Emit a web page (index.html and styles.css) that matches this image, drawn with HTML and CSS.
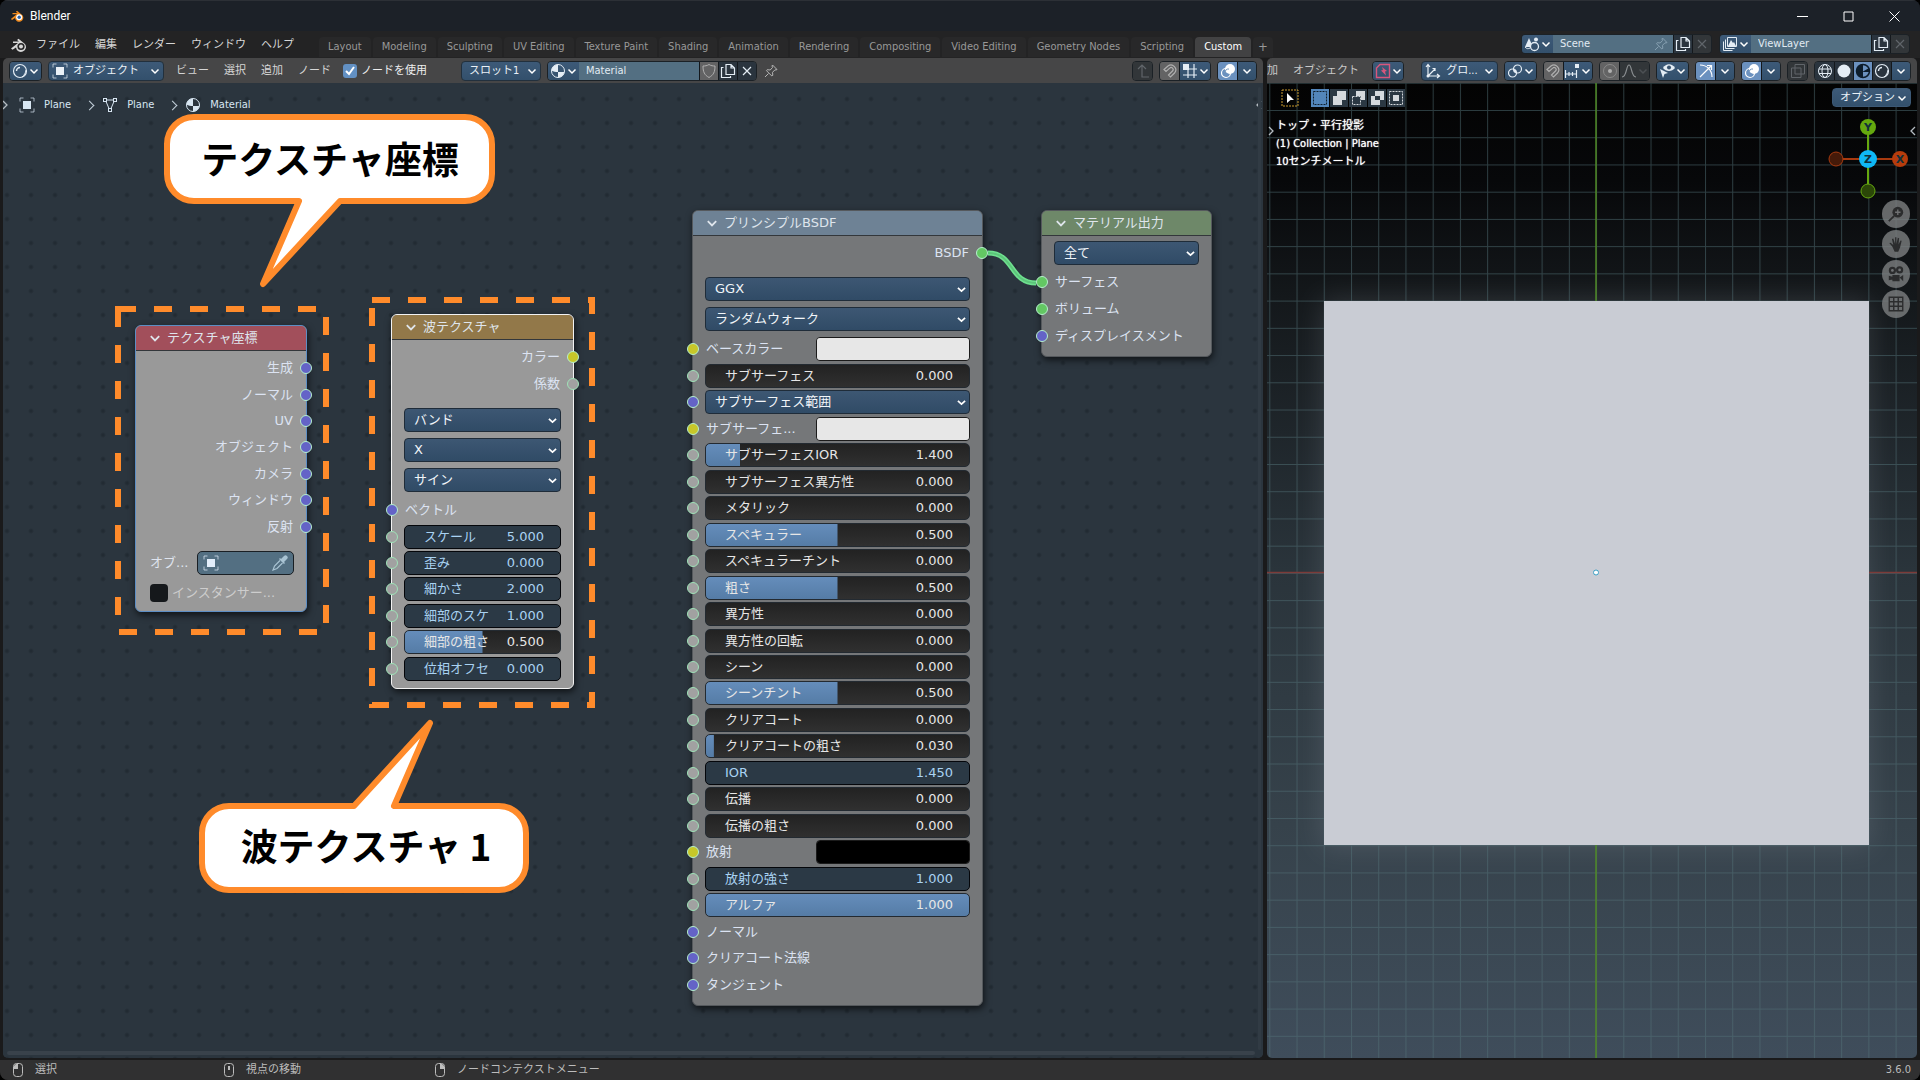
FILE: index.html
```html
<!DOCTYPE html>
<html lang="ja">
<head>
<meta charset="utf-8">
<title>Blender</title>
<link rel="stylesheet" href="styles.css">
</head>
<body>
<svg class="defs" aria-hidden="true">
  <defs>
    <symbol id="chev" viewBox="0 0 10 10"><path d="M1.500 3.500 5 7l3.500-3.500" fill="none" stroke="currentColor" stroke-width="1.500"/></symbol>
    <symbol id="obj" viewBox="0 0 16 16"><path d="M1 4.500V1h3.500M11.500 1H15v3.500M15 11.500V15h-3.500M4.500 15H1v-3.500" fill="none" stroke="currentColor" opacity=".7"/><path d="M4 4h8v8H4z" fill="currentColor"/></symbol>
    <symbol id="mat" viewBox="0 0 16 16"><circle cx="8" cy="8" r="6.500" fill="none" stroke="currentColor"/><path d="M8 1.500a6.500 6.500 0 0 0-6.500 6c2 1.300 4.200 1.500 6.500 1.500zM8 9h6.300A6.500 6.500 0 0 1 8 14.500z" fill="currentColor"/></symbol>
    <symbol id="matfill" viewBox="0 0 16 16"><circle cx="8" cy="8" r="6.500" fill="#6b91bf" stroke="#0d1d2c" stroke-width="1.500"/><path d="M8 1.500A6.500 6.500 0 0 0 4 13l4 1.500V9h6.300A6.500 6.500 0 0 0 14 5L8 8.500z" fill="#0d1d2c"/></symbol>
    <symbol id="mesh" viewBox="0 0 16 16"><path d="M4.500 3h7M4 4.500l3 7M12 4.500l-3 7" fill="none" stroke="currentColor"/><g fill="none" stroke="currentColor"><rect x="1.500" y="1.500" width="3" height="3"/><rect x="11.500" y="1.500" width="3" height="3"/><rect x="6.500" y="11.500" width="3" height="3"/></g></symbol>
    <symbol id="sphere" viewBox="0 0 16 16"><circle cx="8" cy="8" r="6.500" fill="none" stroke="currentColor" stroke-width="1.200"/><path d="M4.500 8A3.500 3.500 0 0 1 8 4.500" fill="none" stroke="currentColor" stroke-width="1.500"/><path d="M10 14c2.500-2 3.500-4 4-7" fill="none" stroke="currentColor"/></symbol>
    <symbol id="shield" viewBox="0 0 16 16"><path d="M8 1.500c2 1.300 4 1.500 6 1.500 0 6-1.500 9-6 11.500C3.500 12 2 9 2 3c2 0 4-.2 6-1.500z" fill="none" stroke="currentColor"/></symbol>
    <symbol id="copy" viewBox="0 0 16 16"><path d="M6 1.500h5l3.500 3.500v6.500H6zM11 1.500V5h3.500M3.500 4.500h-2v10h9v-1.500" fill="none" stroke="currentColor" stroke-width="1.200"/></symbol>
    <symbol id="cross" viewBox="0 0 16 16"><path d="m4 4 8 8M12 4l-8 8" stroke="currentColor" stroke-width="1.200"/></symbol>
    <symbol id="pin" viewBox="0 0 16 16"><path d="m9.500 2 4.500 4.500-1 .5-1-.2-2.500 2.500.3 3-1 .7-5.300-5.300.7-1 3 .3L9.500 4.500 9 3zM5.500 10.500 2 14" fill="none" stroke="currentColor" stroke-linejoin="round"/></symbol>
    <symbol id="magnet" viewBox="0 0 16 16"><path d="M2 6.500 6 3a4.800 4.800 0 0 1 6.500 7L8.500 14l-2-2 4-4a2 2 0 0 0-2.800-2.900L4 8.500z" fill="none" stroke="currentColor" stroke-width="1.200"/></symbol>
    <symbol id="grid" viewBox="0 0 16 16"><path d="M6 1v14M12 1v14M1 6h14M1 12h14" stroke="currentColor" stroke-width="1.200"/><path d="M1 1h6v6H1z" fill="currentColor"/></symbol>
    <symbol id="incr" viewBox="0 0 16 16"><path d="M1.500 7v8M1 11h12M5 9v4M8.500 9v4M12.500 7v8" stroke="currentColor" stroke-width="1.200"/><path d="M11 1h4v4h-4z" fill="currentColor"/></symbol>
    <symbol id="overlay" viewBox="0 0 16 16"><circle cx="10" cy="6" r="5" fill="currentColor"/><circle cx="6" cy="10" r="4.500" fill="none" stroke="currentColor" stroke-width="1.200"/><path d="M5 10a3.500 3.500 0 0 1 4-4" stroke="#7798bd" fill="none"/></symbol>
    <symbol id="parent" viewBox="0 0 16 16"><path d="M3 6l4-4 4 4M7 2v12h7" fill="none" stroke="currentColor" stroke-width="1.200"/></symbol>
    <symbol id="axes" viewBox="0 0 16 16"><path d="M3 2v11h11M3 13l7-7M1 4l2-2.500L5 4M12 11l2.500 2-2.500 2M7.500 5.500H10V8" fill="none" stroke="currentColor" stroke-width="1.200"/><circle cx="3" cy="13" r="1.500" fill="currentColor"/></symbol>
    <symbol id="pivot" viewBox="0 0 16 16"><circle cx="5.500" cy="10" r="4" fill="none" stroke="currentColor" stroke-width="1.200"/><circle cx="10.500" cy="6" r="4" fill="none" stroke="currentColor" stroke-width="1.200"/><circle cx="8" cy="8" r="1.500" fill="currentColor"/></symbol>
    <symbol id="dot" viewBox="0 0 16 16"><circle cx="8" cy="8" r="6.500" fill="none" stroke="currentColor" opacity=".5"/><circle cx="8" cy="8" r="2" fill="currentColor"/></symbol>
    <symbol id="curve" viewBox="0 0 16 16"><path d="M1 14c5 0 4-12 7-12s2 12 7 12" fill="none" stroke="currentColor" stroke-width="1.200"/></symbol>
    <symbol id="eye" viewBox="0 0 16 16"><path d="M4 5c3-5 9-5 12 0-3 4-9 4-12 0z" fill="currentColor"/><circle cx="10" cy="4.500" r="2" fill="#35506c"/><path d="m1 6 8 4-3.500 1L4 15z" fill="currentColor"/></symbol>
    <symbol id="gizmo" viewBox="0 0 16 16"><path d="M2 2c7 0 12 5 12 12M2 14 13 3M9 2.500h4.500V7" fill="none" stroke="currentColor" stroke-width="1.200"/></symbol>
    <symbol id="xray" viewBox="0 0 16 16"><path d="M5 1.500h9.500V11H5zM1.500 5H11v9.500H1.500z" fill="none" stroke="currentColor"/></symbol>
    <symbol id="wire" viewBox="0 0 16 16"><g fill="none" stroke="currentColor"><circle cx="8" cy="8" r="6.500"/><ellipse cx="8" cy="8" rx="3" ry="6.500"/><path d="M2 6h12M2 10.500h12"/></g></symbol>
    <symbol id="solid" viewBox="0 0 16 16"><circle cx="8" cy="8" r="6.500" fill="currentColor"/></symbol>
    <symbol id="scene" viewBox="0 0 16 16"><path d="M5 2 9 11H1z" fill="currentColor"/><circle cx="12" cy="3.500" r="2" fill="currentColor"/><circle cx="10.500" cy="10.500" r="4" fill="#35506c" stroke="currentColor" stroke-width="1.300"/><path d="M1 11c2 2 3 2 5 1" fill="none" stroke="currentColor"/></symbol>
    <symbol id="layers" viewBox="0 0 16 16"><path d="M5.500 1.500h9v9h-9zM3.500 3.500v9h9M1.500 5.500v9h9" fill="none" stroke="currentColor"/><path d="m6 10 3-6 2 3 1-1 2 4z" fill="currentColor"/></symbol>
    <symbol id="blender" viewBox="0 0 18 16"><path d="M1 11.500 8 6H3V4.500h6L7 3l1.500-1.200L15 7a5 5 0 1 1-9 3.500l-3.500 2.200z" fill="currentColor"/><circle cx="11" cy="9.500" r="3.600" fill="var(--hole)"/><circle cx="11" cy="9.500" r="2" fill="var(--eye)"/></symbol>
    <symbol id="dropper" viewBox="0 0 16 16"><path d="M8 5.500 2.500 11 1 15l4-1.500L10.500 8" fill="none" stroke="currentColor" stroke-width="1.200"/><path d="m7 4 5 5 1-1-1-1 3-3a2 2 0 0 0-3-3L9 4 8 3z" fill="currentColor"/></symbol>
    <symbol id="fake" viewBox="0 0 16 16"><path d="M5 1.500h9.500v13h-13V5z" fill="none" stroke="#d9567c" stroke-width="1.400"/><path d="M7 4l5 4-2 .5 1 4-5-5 2-.5z" fill="#d9567c"/></symbol>
    <symbol id="right" viewBox="0 0 8 12"><path d="m2 2 4 4-4 4" fill="none" stroke="currentColor" stroke-width="1.300"/></symbol>
    <symbol id="left" viewBox="0 0 8 12"><path d="M6 2 2 6l4 4" fill="none" stroke="currentColor" stroke-width="1.300"/></symbol>
  </defs>
</svg>

<header class="titlebar">
  <svg class="logo"><use href="#blender"/></svg>
  <h1>Blender</h1>
  <div class="winbtns">
    <button aria-label="最小化"><svg viewBox="0 0 11 11"><path d="M0 5.500h11"/></svg></button>
    <button aria-label="最大化"><svg viewBox="0 0 11 11"><path d="M1 1h9v9H1z"/></svg></button>
    <button aria-label="閉じる"><svg viewBox="0 0 11 11"><path d="m.5.500 10 10M10.500.500l-10 10"/></svg></button>
  </div>
</header>

<div class="topbar">
  <nav class="menus">
    <button class="app" aria-label="Blender"><svg><use href="#blender"/></svg></button>
    <button>ファイル</button><button>編集</button><button>レンダー</button><button>ウィンドウ</button><button>ヘルプ</button>
  </nav>
  <nav class="tabs">
    <button>Layout</button><button>Modeling</button><button>Sculpting</button><button>UV Editing</button><button>Texture Paint</button><button>Shading</button><button>Animation</button><button>Rendering</button><button>Compositing</button><button>Video Editing</button><button>Geometry Nodes</button><button>Scripting</button><button class="on">Custom</button><button class="add" aria-label="追加">+</button>
  </nav>
  <div class="scenes">
    <div class="group">
      <button class="b" aria-label="シーン"><svg class="i"><use href="#scene"/></svg><svg class="c"><use href="#chev"/></svg></button>
      <label class="field"><input value="Scene" aria-label="シーン名"><svg class="i dim"><use href="#pin"/></svg></label>
      <button class="b dark" aria-label="複製"><svg class="i"><use href="#copy"/></svg></button>
      <button class="b off" aria-label="削除"><svg class="i"><use href="#cross"/></svg></button>
    </div>
    <div class="group">
      <button class="b" aria-label="レイヤー"><svg class="i"><use href="#layers"/></svg><svg class="c"><use href="#chev"/></svg></button>
      <label class="field"><input value="ViewLayer" aria-label="レイヤー名"></label>
      <button class="b dark" aria-label="複製"><svg class="i"><use href="#copy"/></svg></button>
      <button class="b off" aria-label="削除"><svg class="i"><use href="#cross"/></svg></button>
    </div>
  </div>
</div>

<main class="workspace">
  <section class="editor nodes">
    <div class="bar">
      <div class="group"><button class="b" aria-label="エディター"><svg class="i"><use href="#sphere"/></svg><svg class="c"><use href="#chev"/></svg></button></div>
      <button class="pick pick-obj"><svg class="i"><use href="#obj"/></svg><span>オブジェクト</span><svg class="c"><use href="#chev"/></svg></button>
      <nav class="barmenu"><button>ビュー</button><button>選択</button><button>追加</button><button>ノード</button></nav>
      <label class="use"><input type="checkbox" checked>ノードを使用</label>
      <button class="pick pick-slot"><span>スロット1</span><svg class="c"><use href="#chev"/></svg></button>
      <div class="group">
        <button class="b" aria-label="マテリアル"><svg class="i"><use href="#mat"/></svg><svg class="c"><use href="#chev"/></svg></button>
        <label class="field"><input value="Material" aria-label="マテリアル名"></label>
        <button class="b gray" aria-label="フェイクユーザー"><svg class="i"><use href="#shield"/></svg></button>
        <button class="b dark" aria-label="複製"><svg class="i"><use href="#copy"/></svg></button>
        <button class="b dark" aria-label="解除"><svg class="i"><use href="#cross"/></svg></button>
      </div>
      <button class="bare" aria-label="ピン"><svg class="i"><use href="#pin"/></svg></button>
      <div class="tail">
        <div class="group"><button class="b off" aria-label="親ノードツリー"><svg class="i"><use href="#parent"/></svg></button></div>
        <div class="group"><button class="b gray" aria-label="スナップ"><svg class="i"><use href="#magnet"/></svg></button><button class="b" aria-label="スナップ先"><svg class="i"><use href="#grid"/></svg><svg class="c"><use href="#chev"/></svg></button></div>
        <div class="group"><button class="b lit" aria-label="オーバーレイ"><svg class="i"><use href="#overlay"/></svg></button><button class="b" aria-label="オーバーレイ設定"><svg class="c"><use href="#chev"/></svg></button></div>
      </div>
    </div>
    <div class="canvas">
      <ol class="crumbs">
        <li><svg class="i"><use href="#obj"/></svg>Plane</li>
        <li><svg class="i"><use href="#mesh"/></svg>Plane</li>
        <li><svg class="i"><use href="#mat"/></svg>Material</li>
      </ol>
      <svg class="flap flap-left"><use href="#right"/></svg><svg class="flap flap-right"><use href="#left"/></svg>
      <i class="scroll-x"></i><i class="scroll-y"></i>

      <article class="node tex">
        <h2><svg><use href="#chev"/></svg>テクスチャ座標</h2>
        <div class="body">
          <ul class="rows rows-7">
            <li class="out"><i class="s vec"></i>生成</li>
            <li class="out"><i class="s vec"></i>ノーマル</li>
            <li class="out"><i class="s vec"></i>UV</li>
            <li class="out"><i class="s vec"></i>オブジェクト</li>
            <li class="out"><i class="s vec"></i>カメラ</li>
            <li class="out"><i class="s vec"></i>ウィンドウ</li>
            <li class="out"><i class="s vec"></i>反射</li>
          </ul>
          <div class="stack">
            <div class="objrow"><span>オブ...</span><button class="objfield" aria-label="オブジェクト"><svg class="i"><use href="#obj"/></svg><svg class="i drop"><use href="#dropper"/></svg></button></div>
            <label class="inst"><input type="checkbox">インスタンサー...</label>
          </div>
        </div>
      </article>

      <article class="node wave">
        <h2><svg><use href="#chev"/></svg>波テクスチャ</h2>
        <div class="body">
          <ul class="rows rows-2">
            <li class="out"><i class="s col"></i>カラー</li>
            <li class="out"><i class="s val"></i>係数</li>
          </ul>
          <div class="stack">
            <select aria-label="タイプ"><option>バンド</option></select>
            <select aria-label="方向"><option>X</option></select>
            <select aria-label="形状"><option>サイン</option></select>
          </div>
          <ul class="rows rows-7 after">
            <li><i class="s vec"></i>ベクトル</li>
            <li><i class="s val"></i><label class="num key"><span>スケール</span><input value="5.000"></label></li>
            <li><i class="s val"></i><label class="num key"><span>歪み</span><input value="0.000"></label></li>
            <li><i class="s val"></i><label class="num key"><span>細かさ</span><input value="2.000"></label></li>
            <li><i class="s val"></i><label class="num key"><span>細部のスケ</span><input value="1.000"></label></li>
            <li><i class="s val"></i><label class="num" style="--v:50%"><span>細部の粗さ</span><input value="0.500"></label></li>
            <li><i class="s val"></i><label class="num key"><span>位相オフセ</span><input value="0.000"></label></li>
          </ul>
        </div>
      </article>

      <article class="node bsdf">
        <h2><svg><use href="#chev"/></svg>プリンシプルBSDF</h2>
        <div class="body">
          <ul class="rows rows-1"><li class="out"><i class="s shader"></i>BSDF</li></ul>
          <div class="stack">
            <select aria-label="分布"><option>GGX</option></select>
            <select aria-label="サブサーフェス方式"><option>ランダムウォーク</option></select>
          </div>
          <ul class="rows rows-25 after">
            <li><i class="s col"></i><label class="color"><span>ベースカラー</span><input type="color" value="#e7e7e7"></label></li>
            <li><i class="s val"></i><label class="num"><span>サブサーフェス</span><input value="0.000"></label></li>
            <li><i class="s vec"></i><select aria-label="サブサーフェス範囲"><option>サブサーフェス範囲</option></select></li>
            <li><i class="s col"></i><label class="color"><span>サブサーフェ...</span><input type="color" value="#e7e7e7"></label></li>
            <li><i class="s val"></i><label class="num" style="--v:13%"><span>サブサーフェスIOR</span><input value="1.400"></label></li>
            <li><i class="s val"></i><label class="num"><span>サブサーフェス異方性</span><input value="0.000"></label></li>
            <li><i class="s val"></i><label class="num"><span>メタリック</span><input value="0.000"></label></li>
            <li><i class="s val"></i><label class="num" style="--v:50%"><span>スペキュラー</span><input value="0.500"></label></li>
            <li><i class="s val"></i><label class="num"><span>スペキュラーチント</span><input value="0.000"></label></li>
            <li><i class="s val"></i><label class="num" style="--v:50%"><span>粗さ</span><input value="0.500"></label></li>
            <li><i class="s val"></i><label class="num"><span>異方性</span><input value="0.000"></label></li>
            <li><i class="s val"></i><label class="num"><span>異方性の回転</span><input value="0.000"></label></li>
            <li><i class="s val"></i><label class="num"><span>シーン</span><input value="0.000"></label></li>
            <li><i class="s val"></i><label class="num" style="--v:50%"><span>シーンチント</span><input value="0.500"></label></li>
            <li><i class="s val"></i><label class="num"><span>クリアコート</span><input value="0.000"></label></li>
            <li><i class="s val"></i><label class="num" style="--v:3%"><span>クリアコートの粗さ</span><input value="0.030"></label></li>
            <li><i class="s val"></i><label class="num key"><span>IOR</span><input value="1.450"></label></li>
            <li><i class="s val"></i><label class="num"><span>伝播</span><input value="0.000"></label></li>
            <li><i class="s val"></i><label class="num"><span>伝播の粗さ</span><input value="0.000"></label></li>
            <li><i class="s col"></i><label class="color"><span>放射</span><input type="color" value="#000000"></label></li>
            <li><i class="s val"></i><label class="num key"><span>放射の強さ</span><input value="1.000"></label></li>
            <li><i class="s val"></i><label class="num" style="--v:100%"><span>アルファ</span><input value="1.000"></label></li>
            <li><i class="s vec"></i>ノーマル</li>
            <li><i class="s vec"></i>クリアコート法線</li>
            <li><i class="s vec"></i>タンジェント</li>
          </ul>
        </div>
      </article>

      <article class="node output">
        <h2><svg><use href="#chev"/></svg>マテリアル出力</h2>
        <div class="body">
          <select aria-label="ターゲット"><option>全て</option></select>
          <ul class="rows rows-3">
            <li><i class="s shader"></i>サーフェス</li>
            <li><i class="s shader"></i>ボリューム</li>
            <li><i class="s vec"></i>ディスプレイスメント</li>
          </ul>
        </div>
      </article>

      <svg class="marks" aria-hidden="true">
        <g transform="translate(-3 -83)" fill="none">
          <path d="M988 253C1015 253 1009 283 1036 283" stroke="#6fe08f" stroke-width="5"/>
          <path d="M988 253C1015 253 1009 283 1036 283" stroke="#5cc47a" stroke-width="2"/>
          <g stroke="#ff8b2b" stroke-width="6">
            <rect x="118" y="309" width="208" height="323" stroke-dasharray="18 18"/>
            <rect x="372" y="300" width="220" height="405" stroke-dasharray="18 18"/>
            <path fill="#fff" stroke-linejoin="round" d="M194 117H465A27 27 0 0 1 492 144V174A27 27 0 0 1 465 201H340L263 284L299 201H194A27 27 0 0 1 167 174V144A27 27 0 0 1 194 117Z"/>
            <path fill="#fff" stroke-linejoin="round" d="M229 806H354L430 723L394 806H499A27 27 0 0 1 526 833V863A27 27 0 0 1 499 890H229A27 27 0 0 1 202 863V833A27 27 0 0 1 229 806Z"/>
          </g>
        </g>
      </svg>
      <p class="note note-a">テクスチャ座標</p>
      <p class="note note-b">波テクスチャ 1</p>
    </div>
  </section>

  <section class="editor view">
    <div class="bar">
      <nav class="barmenu"><button>加</button><button>オブジェクト</button></nav>
      <div class="group"><button class="b" aria-label="モード"><svg class="i"><use href="#fake"/></svg><svg class="c"><use href="#chev"/></svg></button></div>
      <button class="pick pick-axes"><svg class="i"><use href="#axes"/></svg><span>グロ...</span><svg class="c"><use href="#chev"/></svg></button>
      <div class="group"><button class="b" aria-label="ピボット"><svg class="i"><use href="#pivot"/></svg><svg class="c"><use href="#chev"/></svg></button></div>
      <div class="group"><button class="b gray" aria-label="スナップ"><svg class="i"><use href="#magnet"/></svg></button><button class="b" aria-label="スナップ先"><svg class="i"><use href="#incr"/></svg><svg class="c"><use href="#chev"/></svg></button></div>
      <div class="group"><button class="b gray" aria-label="プロポーショナル"><svg class="i"><use href="#dot"/></svg></button><button class="b off" aria-label="減衰"><svg class="i bright"><use href="#curve"/></svg><svg class="c"><use href="#chev"/></svg></button></div>
      <div class="tail">
        <div class="group"><button class="b" aria-label="可視性"><svg class="i"><use href="#eye"/></svg><svg class="c"><use href="#chev"/></svg></button></div>
        <div class="group"><button class="b lit" aria-label="ギズモ"><svg class="i"><use href="#gizmo"/></svg></button><button class="b" aria-label="ギズモ設定"><svg class="c"><use href="#chev"/></svg></button></div>
        <div class="group"><button class="b lit" aria-label="オーバーレイ"><svg class="i"><use href="#overlay"/></svg></button><button class="b" aria-label="オーバーレイ設定"><svg class="c"><use href="#chev"/></svg></button></div>
        <div class="group"><button class="b off" aria-label="透過"><svg class="i"><use href="#xray"/></svg></button></div>
        <div class="group"><button class="b dark" aria-label="ワイヤー"><svg class="i"><use href="#wire"/></svg></button><button class="b dark" aria-label="ソリッド"><svg class="i"><use href="#solid"/></svg></button><button class="b lit" aria-label="マテリアル"><svg class="i"><use href="#matfill"/></svg></button><button class="b dark" aria-label="レンダー"><svg class="i"><use href="#sphere"/></svg></button><button class="b" aria-label="シェーディング設定"><svg class="c"><use href="#chev"/></svg></button></div>
      </div>
    </div>
    <div class="stage">
      <svg class="world" viewBox="0 0 650 975" preserveAspectRatio="xMidYMid slice" aria-hidden="true">
        <defs>
          <pattern id="cells" width="27.230" height="27.230" patternUnits="userSpaceOnUse" x="2.300" y="27"><path d="M.5 0v27.230M0 .5h27.230" stroke="#54747a" stroke-opacity=".5" stroke-width="1"/></pattern>
          <linearGradient id="sky" x1="0" y1="0" x2="0" y2="1"><stop offset="0" stop-color="#030303"/><stop offset=".1" stop-color="#07080a"/><stop offset=".22" stop-color="#14181b"/><stop offset=".5" stop-color="#2a343b"/><stop offset=".76" stop-color="#36424b"/><stop offset="1" stop-color="#3f4d5b"/></linearGradient>
          <filter id="glow" x="-20%" y="-20%" width="140%" height="140%"><feGaussianBlur stdDeviation="14"/></filter>
        </defs>
        <path fill="url(#sky)" d="M0 0h650v975H0z"/>
        <path fill="#b9bfcc" opacity=".17" filter="url(#glow)" d="M55 216h548v548H55z"/>
        <path fill="url(#cells)" d="M0 0h650v975H0z"/>
        <path d="M0 489.500h650" stroke="#7c3b39" stroke-width="1.500"/>
        <path d="M329 0v975" stroke="#4f8a26" stroke-width="1.500"/>
        <path fill="#c9ccd4" d="M57 218h545v544H57z"/>
        <circle cx="329" cy="489.500" r="2.500" fill="#fff" stroke="#3c9fc4"/>
      </svg>
      <div class="tools">
        <button class="tool" aria-label="選択ツール"><svg viewBox="0 0 18 18"><path d="M1 1h16v16H1z" fill="none" stroke="#c99a2e" stroke-dasharray="2 1"/><path d="m6 4 7 7H9.500L6 14z" fill="#fff"/></svg></button>
        <div class="modes">
          <button class="on" aria-label="新規"><svg viewBox="0 0 18 18"><path d="M2.500 2.500h13v13h-13z" fill="none" stroke="#10202e" stroke-dasharray="2 1"/></svg></button>
          <button aria-label="追加"><svg viewBox="0 0 18 18"><path d="M7 2h9v9h-4v5H3V7h4z"/></svg></button>
          <button aria-label="減算"><svg viewBox="0 0 18 18"><path d="M7 2h9v9h-4V7H7z"/><path d="M3.500 7.500h8v8h-8z" fill="none" stroke="#d5d9dd" stroke-dasharray="2 1"/></svg></button>
          <button aria-label="反転"><svg viewBox="0 0 18 18"><path fill-rule="evenodd" d="M7 2h9v9h-4v5H3V7h4zm0 5v4h5V7z"/></svg></button>
          <button aria-label="交差"><svg viewBox="0 0 18 18"><path d="M6 6h6v6H6z"/><path d="M2.500 2.500h13v13h-13z" fill="none" stroke="#d5d9dd" stroke-dasharray="2 1"/></svg></button>
        </div>
        <button class="pick pick-opt"><span>オプション</span><svg class="c"><use href="#chev"/></svg></button>
      </div>
      <div class="info"><p>トップ・平行投影</p><p>(1) Collection | Plane</p><p>10センチメートル</p></div>
      <svg class="flap flap-left low"><use href="#right"/></svg><svg class="flap flap-right low"><use href="#left"/></svg>
      <div class="side">
        <svg class="orbit" viewBox="0 0 82 82">
          <path d="M41 9v64" stroke="#65a80f" stroke-width="2"/><path d="M9 41h64" stroke="#a83a0f" stroke-width="2"/>
          <circle cx="41" cy="9" r="8" fill="#65a80f"/><circle cx="73" cy="41" r="8" fill="#b63c0c"/><circle cx="41" cy="41" r="9" fill="#0fb8f5"/>
          <circle cx="9" cy="41" r="7" fill="#451a09" stroke="#a83a0f"/><circle cx="41" cy="73" r="7" fill="#2b4708" stroke="#65a80f"/>
          <text x="41" y="13">Y</text><text x="73" y="45">X</text><text x="41" y="45">Z</text>
        </svg>
        <div class="nav">
          <button aria-label="ズーム"><svg viewBox="0 0 20 20"><circle cx="12" cy="8" r="6"/><path d="m2 18 6-6" stroke="#2b2c2d" stroke-width="2"/><path d="M12 5v6M9 8h6" stroke="#707274" stroke-width="1.500"/></svg></button>
          <button aria-label="移動"><svg viewBox="0 0 20 20"><path d="M6 13 2.500 9 4 8.500 7 11 5.500 4.500 7 4l2 6V2.500h1.500V10l1.500-7 1.500.5-.7 7L15 6l1.300.5L14.500 14l-2 4.500h-4z"/></svg></button>
          <button aria-label="カメラ"><svg viewBox="0 0 20 20"><circle cx="6" cy="6" r="4"/><circle cx="14" cy="5.500" r="4"/><path d="M6 11h8v7H6zM14 14l4-3v7zM2 12l4 1v3l-4 1z"/><circle cx="6" cy="6" r="1.500" fill="#707274"/><circle cx="14" cy="5.500" r="1.500" fill="#707274"/></svg></button>
          <button aria-label="投影"><svg viewBox="0 0 20 20"><path d="M2.500 2.500h15v15h-15zM7.500 2.500v15M12.500 2.500v15M2.500 7.500h15M2.500 12.500h15" fill="none" stroke="#2b2c2d" stroke-width="1.500"/></svg></button>
        </div>
      </div>
    </div>
  </section>
</main>

<footer class="status">
  <span><svg viewBox="0 0 12 16"><rect x="1.500" y="1.500" width="9" height="13" rx="3"/><path class="f" d="M2 7V4l2-2h2v5z"/></svg>選択</span>
  <span><svg viewBox="0 0 12 16"><rect x="1.500" y="1.500" width="9" height="13" rx="3"/><path class="f" d="M5 4h2v4H5z"/></svg>視点の移動</span>
  <span><svg viewBox="0 0 12 16"><rect x="1.500" y="1.500" width="9" height="13" rx="3"/><path class="f" d="M10 7V4L8 2H6v5z"/></svg>ノードコンテクストメニュー</span>
  <span class="ver">3.6.0</span>
</footer>
</body>
</html>
```
FILE: styles.css
```css
* { box-sizing: border-box; }
html { background: #000; }
body {
  margin: 0;
  min-height: 100vh;
  display: flex;
  flex-direction: column;
  overflow: hidden;
  border-radius: 8px;
  background: #1a1a1b;
  color: #d6d6d6;
  font: 11px/16px "DejaVu Sans Condensed", "DejaVu Sans", "Noto Sans CJK JP", sans-serif;
}
button, input, select { font: inherit; color: inherit; margin: 0; padding: 0; border: 0; background: none; }
h1, h2, p, ul, ol { margin: 0; padding: 0; font: inherit; list-style: none; }
svg { display: block; flex: none; }
.defs { position: absolute; width: 0; height: 0; }

/* window title */
.titlebar { height: 31px; display: flex; align-items: center; padding: 0 3px 0 10px; background: #1c2128; border-top: 1px solid #2c3036; }
.logo { width: 15px; height: 14px; color: #ef8a1e; --hole: #fff; --eye: #2c64a8; }
.titlebar h1 { margin-left: 5px; color: #fff; font: 12px/16px Roboto, "Open Sans", sans-serif; }
.winbtns { margin-left: auto; display: flex; }
.winbtns button { width: 46px; height: 28px; display: grid; place-items: center; }
.winbtns svg { width: 11px; height: 11px; fill: none; stroke: #fff; }

/* top bar */
.topbar { height: 27px; display: flex; align-items: stretch; background: #232324; padding: 0 10px; }
.menus { display: flex; align-items: center; width: 309px; gap: 15px; white-space: nowrap; }
.app svg { width: 18px; height: 16px; color: #d6d6d6; --hole: #232324; --eye: #d6d6d6; }
.app { margin-right: -7px; }
.tabs { display: flex; gap: 2px; padding: 6px 0 1px; white-space: nowrap; }
.tabs button { padding: 0 9px; background: #282829; color: #989898; border-radius: 4px 4px 0 0; }
.tabs .on { background: #424243; color: #fff; }
.tabs .add { padding: 0 5px; font-size: 13px; }
.scenes { margin-left: auto; display: flex; gap: 7px; align-items: center; padding-bottom: 1px; }

/* shared header widgets */
.group { display: flex; height: 20px; border: 1px solid #1b2126; border-radius: 4px; overflow: hidden; }
.b { display: flex; align-items: center; justify-content: center; gap: 1px; min-width: 19px; padding: 0 1px; background: linear-gradient(#3d5a78, #33506c); color: #e4edf5; }
.b + .b, .field + .b { border-left: 1px solid #14181c; }
.i { width: 16px; height: 16px; }
.c { width: 10px; height: 10px; color: #fff; }
.group .b:has(.i):has(.c) { width: 31px; }
.b.dark { background: #2a343e; }
.b.gray { background: #636364; color: #b0b0b0; }
.b.off { background: #323639; color: #60656a; }
.b.off .c { color: #4c5054; }
.b.off .bright { color: #8b8f92; }
.b.lit { background: #6b91bf; color: #fff; }
.field { display: flex; align-items: center; width: 120px; padding: 0 4px 0 7px; background: #536f82; color: #e2ebf2; }
.field input { flex: 1; min-width: 0; outline: 0; }
.dim { color: #86a0b1; }
.pick { display: flex; align-items: center; height: 20px; padding: 0 3px; border: 1px solid #22303d; border-radius: 4px; background: linear-gradient(#3d5a78, #33506c); color: #eaf1f7; white-space: nowrap; }
.pick .c { margin-left: auto; }
.pick .i + span { margin-left: 5px; }
.pick-obj { width: 116px; }
.pick-slot { width: 80px; padding-left: 7px; }
.pick-axes { width: 79px; }
.bare { color: #b5b5b5; }

/* editors */
.workspace { flex: 1; display: flex; gap: 4px; padding: 0 3px 2px; min-height: 0; }
.editor { display: flex; flex-direction: column; min-width: 0; border-radius: 5px; overflow: hidden; }
.nodes { flex: 1260 1 0; }
.view { flex: 650 1 0; }
.bar { height: 25px; flex: none; display: flex; align-items: center; gap: 6px; padding: 0 6px; background: #464647; white-space: nowrap; }
.barmenu { display: flex; gap: 15px; padding: 0 7px 0 6px; }
.nodes .barmenu { padding-right: 6px; }
.tail { margin-left: auto; display: flex; gap: 6px; }
.use { display: flex; align-items: center; gap: 4px; margin-right: 28px; color: #eee; }
.use input { appearance: none; width: 14px; height: 14px; border-radius: 3px; background: #6290c3 url("data:image/svg+xml,%3Csvg xmlns='http://www.w3.org/2000/svg' viewBox='0 0 14 14'%3E%3Cpath d='m3 7 3 3 5-7' fill='none' stroke='%23fff' stroke-width='2'/%3E%3C/svg%3E"); }
.view .bar { padding-left: 0; padding-right: 6px; }
.view .barmenu { padding-left: 0; }
.view .barmenu button { color: #c8c8c8; }
.pick-axes { margin-left: 11px; }

/* node canvas */
.canvas { position: relative; flex: 1; overflow: hidden; background: #2b353e radial-gradient(circle at 12px 12px, #222b33 1px, #2b353e 3px) -8px -20px / 24px 24px; }
.crumbs { display: flex; gap: 15px; padding: 14px 0 0 16px; color: #d8e6f2; }
.crumbs li { display: flex; align-items: center; gap: 9px; }
.crumbs li + li::before { content: ""; width: 6px; height: 6px; border: solid #c5d2dc; border-width: 1px 1px 0 0; transform: rotate(45deg); }
.flap { position: absolute; top: 16px; width: 8px; height: 12px; color: #b5bcc2; }
.flap-left { left: -2px; }
.flap-right { right: 0; }
.low { top: 42px; }
.low.flap-left { left: 0; }
.scroll-x, .scroll-y { position: absolute; background: #39424b; border-radius: 3px; }
.scroll-x { left: 4px; right: 8px; bottom: 3px; height: 4px; }
.scroll-y { top: 4px; bottom: 8px; right: 2px; width: 3px; background: #313b44; }

/* nodes */
.node { position: absolute; border: 1px solid #55595d; border-radius: 6px; background: #757779; color: #dfe4ee; font: 13px/18px "DejaVu Sans", "Noto Sans CJK JP", sans-serif; box-shadow: 1px 3px 7px rgba(0, 0, 0, .65); white-space: nowrap; }
.node h2 { height: 25px; display: flex; align-items: center; gap: 6px; padding: 0 13px; border-bottom: 1px solid #33373b; border-radius: 5px 5px 0 0; color: #dfe5ec; }
.node h2 svg { width: 12px; height: 12px; }
.body { padding: 4px 12px 6px; }
.tex { left: 132px; top: 242px; width: 172px; background: #999; border-color: #5d8ec4; }
.tex h2 { background: #a24f5b; }
.wave { left: 388px; top: 231px; width: 183px; background: #999; border-color: #f2f2f2; }
.wave h2 { background: #927849; }
.bsdf { left: 689px; top: 127px; width: 291px; }
.bsdf h2 { background: #6e8295; }
.output { left: 1038px; top: 127px; width: 171px; }
.output h2 { background: #6e8869; }
.bsdf .body, .output .body { padding-top: 5px; padding-bottom: 7px; }
.rows { display: grid; grid-auto-rows: 1fr; }
.rows-1 { height: 24px; }
.rows-2 { height: 53px; }
.rows-3 { height: 80px; margin-top: 4px; }
.rows-7 { height: 185px; }
.rows-25 { height: 662px; }
.after { margin-top: 5px; }
.rows li { position: relative; display: flex; align-items: center; padding: 0 1px; color: #dce3f2; }
.rows li:has(label, select) { padding: 0; }
.rows .out { justify-content: flex-end; }
.s { position: absolute; left: -18px; top: calc(50% - 6px); width: 12px; height: 12px; border: 1px solid #b5f0cd; border-radius: 50%; background: #6463c7; }
.out .s { left: auto; right: -18px; }
.val { background: #a1a1a1; border-color: #9fe3b8; }
.col { background: #c7c729; }
.shader { background: #63c763; }
.stack { display: flex; flex-direction: column; gap: 6px; margin-top: 11px; }
.bsdf .stack { margin-top: 12px; }
.node select { appearance: none; width: 100%; height: 24px; padding: 0 9px; border: 1px solid #1f2c39; border-radius: 4px; color: #f1f5f9; background: url("data:image/svg+xml,%3Csvg xmlns='http://www.w3.org/2000/svg' viewBox='0 0 8 8'%3E%3Cpath d='m.8 2.500 3.200 3 3.200-3' fill='none' stroke='%23fff' stroke-width='1.500'/%3E%3C/svg%3E") right 3px center / 9px 9px no-repeat, linear-gradient(#3d5773, #304b66); }
.num { flex: 1; min-width: 0; display: flex; align-items: center; height: 24px; padding: 0 16px 0 19px; border: 1px solid #232a31; border-radius: 5px; color: #e6e6e6; background: linear-gradient(#658dbb, #557ca6) 0 0 / var(--v, 0%) 100% no-repeat, linear-gradient(#222, #303030); }
.num span { flex: 1; }
.num input { width: 38px; text-align: right; outline: 0; }
.key { background: #2b3945; border-color: #04060a; color: #a9d2f2; }
.color { flex: 1; display: flex; align-items: center; }
.color span { flex: 1; padding-left: 1px; }
.color input { width: 154px; height: 24px; appearance: none; border: 1px solid #1b1b1b; border-radius: 4px; overflow: hidden; }
.color input::-webkit-color-swatch-wrapper { padding: 0; }
.color input::-webkit-color-swatch { border: 0; }
.objrow, .inst { display: flex; align-items: center; justify-content: space-between; height: 24px; padding-left: 2px; }
.objfield { width: 97px; height: 24px; padding: 0 5px; display: flex; justify-content: space-between; align-items: center; border: 1px solid #1a1f24; border-radius: 5px; background: #536f82; color: #e3eefb; }
.drop { color: #a9c3d3; }
.inst { justify-content: flex-start; gap: 4px; color: #cdcdcd; }
.inst input { appearance: none; width: 18px; height: 18px; border-radius: 4px; background: #15181b; }

/* annotations over the canvas */
.marks { position: absolute; inset: 0; width: 100%; height: 100%; }
.note { position: absolute; color: #000; font: 700 37px/56px "Noto Sans CJK JP", sans-serif; text-align: center; width: 330px; }
.note-a { left: 162px; top: 47px; }
.note-b { left: 198px; top: 734px; }

/* 3D view */
.stage { position: relative; flex: 1; color: #fff; overflow: hidden; }
.world { position: absolute; inset: 0; width: 100%; height: 100%; }
.tools { position: relative; display: flex; align-items: center; gap: 12px; padding: 5px 6px 0 14px; }
.tool, .tool svg { width: 18px; height: 18px; }
.modes { display: flex; gap: 1px; }
.modes button { width: 18px; height: 18px; background: #2b3843; }
.modes .on { background: #5386bb; }
.modes svg { width: 18px; height: 18px; fill: #d5d9dd; }
.pick-opt { margin-left: auto; width: 79px; height: 19px; padding-left: 7px; border-color: #3c5875; }
.info { position: relative; padding: 10px 0 0 9px; line-height: 18px; text-shadow: 0 0 1px #fff; }
.side { position: absolute; top: 35px; right: 8px; display: flex; flex-direction: column; align-items: flex-end; }
.orbit { width: 82px; height: 82px; }
.orbit text { font: 700 11px "DejaVu Sans", sans-serif; text-anchor: middle; fill: #12303a; }
.nav { display: grid; gap: 2px; margin-right: -1px; }
.nav button { width: 28px; height: 28px; display: grid; place-items: center; border-radius: 50%; background: rgba(125, 127, 129, .8); }
.nav svg { width: 18px; height: 18px; fill: #2b2c2d; }

/* status bar */
.status { height: 20px; display: flex; align-items: center; padding: 0 9px 0 12px; background: #303031; color: #bcbcbc; }
.status span { display: flex; align-items: center; gap: 11px; width: 211px; white-space: nowrap; }
.status svg { width: 12px; height: 16px; fill: none; stroke: #bcbcbc; }
.status .f { fill: #bcbcbc; stroke: none; }
.status .ver { width: auto; margin-left: auto; }
```
